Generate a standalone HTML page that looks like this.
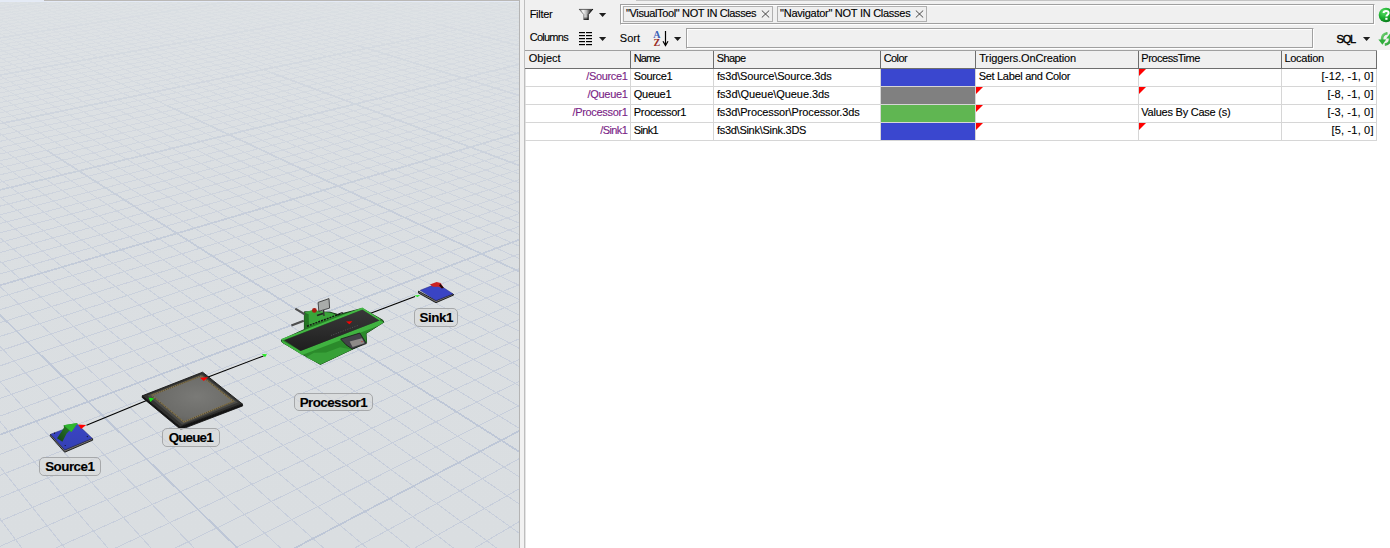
<!DOCTYPE html>
<html><head><meta charset="utf-8">
<style>
*{margin:0;padding:0;box-sizing:border-box}
html,body{width:1390px;height:548px;overflow:hidden;background:#f0f0f0;font-family:"Liberation Sans",sans-serif;font-size:11px;color:#000}
.a{position:absolute}
#view{position:absolute;left:0;top:0;width:519px;height:548px;background:linear-gradient(#dee2e5 0px,#dbdfe2 180px,#dadee1 548px);overflow:hidden}
.lbl{position:absolute;height:19px;border:1px solid #a9abad;border-radius:5px;background:rgba(214,216,218,0.55);font-weight:bold;font-size:13px;line-height:17px;text-align:center;color:#0a0a0a;white-space:nowrap}
.t{position:absolute;white-space:nowrap;line-height:13px;color:#000;-webkit-text-stroke:0.12px #000}
.c{position:absolute;white-space:nowrap;line-height:13px;color:#000;-webkit-text-stroke:0.12px #000}
.r{text-align:right}
.p{color:#7a1e86;-webkit-text-stroke:0.12px #7a1e86}
.tri{position:absolute;width:0;height:0;border-top:7px solid #f00;border-right:7px solid transparent}
.arr{position:absolute;width:0;height:0;border-top:4px solid #222;border-left:4px solid transparent;border-right:4px solid transparent}
</style></head><body>
<div id="view">
<svg width="519" height="548" viewBox="0 0 519 548" style="position:absolute;left:0;top:0">
<defs><linearGradient id="fg" x1="0" y1="0" x2="0" y2="548" gradientUnits="userSpaceOnUse">
<stop offset="0" stop-color="#fff" stop-opacity="0.10"/>
<stop offset="0.1" stop-color="#fff" stop-opacity="0.28"/>
<stop offset="0.25" stop-color="#fff" stop-opacity="0.5"/>
<stop offset="0.45" stop-color="#fff" stop-opacity="0.8"/>
<stop offset="0.72" stop-color="#fff" stop-opacity="1"/>
<stop offset="1" stop-color="#fff" stop-opacity="1"/></linearGradient>
<mask id="gm"><rect width="519" height="548" fill="url(#fg)"/></mask></defs>
<g mask="url(#gm)" fill="none" shape-rendering="crispEdges">
<path d="M8330.46 -16195.53L-692.46 -12.30 M12000.26 -25192.07L-679.54 -13.52 M25174.46 -57488.75L-666.76 -14.74 M-77331.91 193806.65L-654.11 -15.94 M-12858.32 35749.00L-641.58 -17.13 M-6266.50 19589.08L-629.18 -18.31 M-3759.12 13442.22L-616.90 -19.47 M-2437.89 10203.21L-604.75 -20.63 M-1622.13 8203.36L-592.72 -21.77 M-667.79 5863.79L-569.00 -24.02 M-364.61 5120.53L-557.32 -25.13 M-127.14 4538.37L-545.75 -26.23 M63.90 4070.04L-534.29 -27.32 M220.91 3685.14L-522.94 -28.40 M352.23 3363.19L-511.70 -29.46 M463.70 3089.92L-500.57 -30.52 M559.50 2855.06L-489.54 -31.57 M642.72 2651.05L-478.62 -32.61 M780.17 2314.08L-457.08 -34.65 M837.59 2173.33L-446.46 -35.66 M889.03 2047.21L-435.94 -36.66 M935.39 1933.57L-425.51 -37.65 M977.38 1830.63L-415.18 -38.63 M1015.59 1736.96L-404.95 -39.60 M1050.51 1651.35L-394.81 -40.57 M1082.55 1572.80L-384.76 -41.52 M1112.05 1500.49L-374.80 -42.47 M1164.55 1371.79L-355.14 -44.33 M1188.00 1314.28L-345.45 -45.25 M1209.86 1260.71L-335.84 -46.17 M1230.27 1210.68L-326.32 -47.07 M1249.37 1163.86L-316.88 -47.97 M1267.28 1119.94L-307.52 -48.86 M1284.12 1078.66L-298.24 -49.74 M1299.97 1039.80L-289.04 -50.61 M1314.92 1003.14L-279.92 -51.48 M1342.42 935.73L-261.92 -53.19 M1355.09 904.67L-253.04 -54.03 M1367.11 875.20L-244.23 -54.87 M1378.54 847.19L-235.49 -55.70 M1389.41 820.54L-226.83 -56.52 M1399.77 795.15L-218.24 -57.34 M1409.64 770.94L-209.72 -58.15 M1419.07 747.82L-201.27 -58.95 M1428.09 725.72L-192.89 -59.74 M1444.97 684.33L-176.34 -61.32 M1452.88 664.93L-168.17 -62.09 M1460.48 646.31L-160.06 -62.86 M1467.77 628.44L-152.02 -63.63 M1474.78 611.26L-144.04 -64.38 M1481.52 594.74L-136.13 -65.14 M1488.00 578.84L-128.28 -65.88 M1494.25 563.52L-120.49 -66.62 M1500.27 548.77L-112.76 -67.35 M1511.68 520.80L-97.49 -68.80 M1517.09 507.53L-89.95 -69.52 M1522.32 494.71L-82.46 -70.23 M1527.37 482.32L-75.04 -70.94 M1532.26 470.34L-67.67 -71.64 M1536.99 458.74L-60.35 -72.33 M1541.57 447.50L-53.10 -73.02 M1546.01 436.62L-45.90 -73.71 M1550.32 426.07L-38.75 -74.38 M1558.54 405.91L-24.62 -75.73 M1562.47 396.27L-17.64 -76.39 M1566.29 386.91L-10.70 -77.05 M1570.00 377.82L-3.82 -77.70 M1573.60 368.99L3.01 -78.35 M1577.11 360.39L9.78 -78.99 M1580.52 352.04L16.51 -79.63 M1583.83 343.91L23.19 -80.27 M1587.06 335.99L29.82 -80.90 M1593.27 320.77L42.93 -82.14 M1596.25 313.46L49.42 -82.76 M1599.16 306.33L55.86 -83.37 M1602.00 299.37L62.25 -83.98 M1604.77 292.59L68.59 -84.58 M1607.46 285.97L74.90 -85.18 M1610.10 279.51L81.15 -85.77 M1612.67 273.21L87.36 -86.36 M1615.18 267.05L93.53 -86.95 M1620.03 255.16L105.73 -88.11 M1622.38 249.42L111.77 -88.68 M1624.67 243.80L117.76 -89.25 M1626.91 238.31L123.72 -89.82 M1629.10 232.94L129.63 -90.38 M1631.24 227.69L135.50 -90.93 M1633.34 222.55L141.33 -91.49 M1635.39 217.52L147.12 -92.04 M1637.40 212.59L152.87 -92.58 M1641.29 203.04L164.26 -93.67 M1643.18 198.42L169.89 -94.20 M1645.03 193.88L175.49 -94.73 M1646.84 189.44L181.05 -95.26 M1648.62 185.08L186.57 -95.78 M1650.36 180.81L192.06 -96.31 M1652.07 176.62L197.50 -96.82 M1653.75 172.51L202.91 -97.34 M1655.39 168.48L208.29 -97.85 M1658.59 160.65L218.94 -98.86 M1660.14 156.84L224.21 -99.36 M1661.67 153.10L229.44 -99.86 M1663.16 149.43L234.65 -100.35 M1664.63 145.82L239.81 -100.84 M1666.08 142.28L244.95 -101.33 M1667.50 138.80L250.05 -101.81 M1668.89 135.39L255.12 -102.30 M1670.26 132.03L260.16 -102.77 M1672.93 125.48L270.13 -103.72 M1674.23 122.29L275.07 -104.19 M1675.51 119.16L279.98 -104.66 M1676.77 116.08L284.86 -105.12 M1678.00 113.04L289.71 -105.58 M1679.22 110.06L294.53 -106.04 M1680.42 107.13L299.31 -106.49 M1681.60 104.24L304.07 -106.94 M1682.76 101.40L308.80 -107.39 M1685.02 95.85L318.17 -108.28 M1686.12 93.14L322.81 -108.72 M1687.21 90.47L327.42 -109.16 M1688.28 87.85L332.01 -109.60 M1689.34 85.26L336.56 -110.03 M1690.38 82.71L341.09 -110.46 M1691.40 80.20L345.59 -110.89 M1692.41 77.73L350.07 -111.31 M1693.40 75.30L354.51 -111.74 M10867.18 -18936.99L1671.30 69.70 M27601.50 -46304.26L1648.68 66.56 M-61303.40 99090.56L1626.52 63.49 M-15178.63 23658.25L1604.80 60.48 M-8871.17 13343.04L1583.50 57.53 M-6367.03 9247.77L1562.62 54.64 M-5023.06 7049.85L1542.13 51.80 M-4184.65 5678.72L1522.04 49.02 M-3611.69 4741.70L1502.33 46.28 M-2879.12 3543.66L1464.00 40.97 M-2630.78 3137.53L1445.37 38.39 M-2430.58 2810.12L1427.07 35.86 M-2265.77 2540.58L1409.11 33.37 M-2127.71 2314.81L1391.46 30.92 M-2010.39 2122.94L1374.13 28.52 M-1909.46 1957.88L1357.10 26.16 M-1821.71 1814.37L1340.37 23.84 M-1744.71 1688.45L1323.92 21.56 M-1615.94 1477.86L1291.88 17.12 M-1561.55 1388.92L1276.25 14.96 M-1512.52 1308.73L1260.89 12.83 M-1468.09 1236.06L1245.79 10.74 M-1427.64 1169.91L1230.93 8.68 M-1390.66 1109.43L1216.32 6.65 M-1356.72 1053.93L1201.93 4.66 M-1325.46 1002.81L1187.78 2.70 M-1296.58 955.58L1173.86 0.77 M-1244.94 871.12L1146.66 -3.00 M-1221.76 833.21L1133.38 -4.84 M-1200.10 797.80L1120.30 -6.65 M-1179.84 764.66L1107.43 -8.44 M-1160.82 733.56L1094.74 -10.19 M-1142.95 704.33L1082.25 -11.93 M-1126.12 676.81L1069.95 -13.63 M-1110.24 650.84L1057.82 -15.31 M-1095.24 626.31L1045.88 -16.97 M-1067.58 581.08L1022.51 -20.20 M-1054.81 560.19L1011.08 -21.79 M-1042.67 540.33L999.81 -23.35 M-1031.12 521.44L988.70 -24.89 M-1020.11 503.44L977.75 -26.41 M-1009.61 486.27L966.95 -27.90 M-999.59 469.88L956.30 -29.38 M-990.01 454.21L945.80 -30.83 M-980.84 439.22L935.44 -32.27 M-963.64 411.09L915.15 -35.08 M-955.57 397.88L905.20 -36.46 M-947.81 385.20L895.39 -37.82 M-940.36 373.01L885.71 -39.16 M-933.19 361.29L876.16 -40.48 M-926.29 350.01L866.73 -41.79 M-919.65 339.14L857.43 -43.08 M-913.24 328.67L848.24 -44.35 M-907.07 318.57L839.17 -45.61 M-895.35 299.40L821.38 -48.07 M-889.78 290.31L812.66 -49.28 M-884.41 281.51L804.04 -50.48 M-879.20 273.00L795.53 -51.66 M-874.17 264.76L787.12 -52.82 M-869.29 256.79L778.82 -53.97 M-864.56 249.06L770.62 -55.11 M-859.98 241.57L762.52 -56.23 M-855.54 234.30L754.51 -57.34 M-847.05 220.41L738.79 -59.52 M-842.98 213.77L731.07 -60.59 M-839.03 207.31L723.44 -61.65 M-835.20 201.04L715.90 -62.69 M-831.47 194.93L708.44 -63.72 M-827.84 189.00L701.07 -64.75 M-824.31 183.22L693.79 -65.75 M-820.87 177.60L686.59 -66.75 M-817.52 172.12L679.47 -67.74 M-811.08 161.59L665.48 -69.68 M-807.98 156.53L658.60 -70.63 M-804.96 151.59L651.80 -71.57 M-802.02 146.77L645.07 -72.51 M-799.14 142.07L638.41 -73.43 M-796.34 137.48L631.83 -74.34 M-793.60 133.00L625.32 -75.24 M-790.92 128.63L618.88 -76.13 M-788.31 124.35L612.51 -77.02 M-783.26 116.10L599.97 -78.75 M-780.82 112.11L593.80 -79.61 M-778.43 108.20L587.70 -80.46 M-776.10 104.39L581.66 -81.29 M-773.82 100.66L575.68 -82.12 M-771.58 97.00L569.77 -82.94 M-769.40 93.43L563.91 -83.75 M-767.26 89.93L558.12 -84.55 M-765.16 86.50L552.38 -85.35 M-761.10 79.85L541.09 -86.91 M-759.13 76.63L535.52 -87.69 M-757.20 73.47L530.02 -88.45 M-755.30 70.37L524.56 -89.20 M-753.45 67.34L519.17 -89.95 M-751.63 64.36L513.82 -90.69 M-749.84 61.44L508.53 -91.43 M-748.09 58.58L503.29 -92.15 M-746.37 55.77L498.10 -92.87 M-743.03 50.30L487.87 -94.29 M-741.40 47.64L482.82 -94.99 M-739.81 45.03L477.83 -95.68 M-738.24 42.47L472.88 -96.37 M-736.70 39.95L467.98 -97.04 M-735.19 37.48L463.13 -97.72 M-733.70 35.05L458.32 -98.38 M-732.24 32.67L453.56 -99.04 M-730.81 30.32L448.84 -99.70 M-728.01 25.75L439.53 -100.99 M-726.65 23.52L434.94 -101.62 M-725.31 21.32L430.39 -102.25 M-723.99 19.17L425.88 -102.88 M-722.69 17.05L421.42 -103.50 M-721.42 14.96L416.99 -104.11 M-720.16 12.91L412.60 -104.72 M-718.93 10.89L408.25 -105.32 M-717.71 8.90L403.94 -105.92 M-715.34 5.02L395.44 -107.10 M-714.18 3.12L391.24 -107.68 M-713.04 1.25L387.08 -108.26 M-711.91 -0.59L382.95 -108.83 M-710.80 -2.40L378.86 -109.39 M-709.71 -4.18L374.81 -109.96 M-708.64 -5.94L370.79 -110.51 M-707.58 -7.67L366.80 -111.06 M-706.54 -9.38L362.85 -111.61" stroke="#c7cedb" stroke-width="1"/>
<path d="M46.61 150.24L39.03 145.41 M39.03 145.41L31.64 140.69 M31.64 140.69L24.43 136.09 M24.43 136.09L17.39 131.59 M17.39 131.59L10.51 127.21 M10.51 127.21L3.80 122.92 M3.80 122.92L-2.76 118.74 M-2.76 118.74L-9.17 114.65 M-9.17 114.65L-15.44 110.65 M-15.44 110.65L-21.57 106.74 M-21.57 106.74L-27.56 102.92 M-27.56 102.92L-33.42 99.18 M-33.42 99.18L-39.15 95.52 M-39.15 95.52L-44.76 91.94 M-44.76 91.94L-50.26 88.44 M167.06 105.41L159.00 101.61 M159.00 101.61L151.11 97.89 M151.11 97.89L143.40 94.25 M143.40 94.25L135.85 90.68 M135.85 90.68L128.46 87.19 M128.46 87.19L121.22 83.78 M121.22 83.78L114.14 80.44 M114.14 80.44L107.19 77.16 M107.19 77.16L100.39 73.95 M100.39 73.95L93.73 70.80 M93.73 70.80L87.19 67.72 M87.19 67.72L80.79 64.70 M80.79 64.70L74.51 61.73 M74.51 61.73L68.35 58.83 M68.35 58.83L62.30 55.98 M62.30 55.98L56.38 53.18 M56.38 53.18L50.56 50.43 M50.56 50.43L44.85 47.74 M44.85 47.74L39.25 45.09 M39.25 45.09L33.74 42.50 M33.74 42.50L28.34 39.95 M28.34 39.95L23.03 37.44 M23.03 37.44L17.82 34.98 M17.82 34.98L12.70 32.57 M12.70 32.57L7.67 30.19 M7.67 30.19L2.72 27.86 M2.72 27.86L-2.14 25.56 M-2.14 25.56L-6.92 23.31 M-6.92 23.31L-11.61 21.09 M-11.61 21.09L-16.23 18.91 M-16.23 18.91L-20.78 16.77 M-20.78 16.77L-25.24 14.66 M-25.24 14.66L-29.64 12.59 M-29.64 12.59L-33.96 10.55 M-33.96 10.55L-38.22 8.54 M-38.22 8.54L-42.41 6.56 M-42.41 6.56L-46.53 4.62 M-46.53 4.62L-50.59 2.70 M271.51 72.78L263.14 69.65 M263.14 69.65L254.94 66.58 M254.94 66.58L246.89 63.57 M246.89 63.57L239.01 60.62 M239.01 60.62L231.27 57.73 M231.27 57.73L223.68 54.89 M223.68 54.89L216.24 52.11 M216.24 52.11L208.94 49.37 M208.94 49.37L201.77 46.69 M201.77 46.69L194.73 44.06 M194.73 44.06L187.82 41.47 M187.82 41.47L181.03 38.94 M181.03 38.94L174.37 36.44 M174.37 36.44L167.82 33.99 M167.82 33.99L161.39 31.59 M161.39 31.59L155.07 29.23 M155.07 29.23L148.86 26.90 M148.86 26.90L142.75 24.62 M142.75 24.62L136.75 22.37 M136.75 22.37L130.85 20.17 M130.85 20.17L125.05 18.00 M125.05 18.00L119.34 15.86 M119.34 15.86L113.73 13.76 M113.73 13.76L108.21 11.70 M108.21 11.70L102.78 9.67 M102.78 9.67L97.43 7.67 M97.43 7.67L92.17 5.70 M92.17 5.70L86.99 3.76 M86.99 3.76L81.90 1.86 M81.90 1.86L76.88 -0.02 M76.88 -0.02L71.94 -1.87 M71.94 -1.87L67.07 -3.69 M67.07 -3.69L62.28 -5.48 M358.35 45.65L349.89 43.03 M349.89 43.03L341.57 40.45 M341.57 40.45L333.41 37.93 M333.41 37.93L325.39 35.45 M325.39 35.45L317.52 33.01 M317.52 33.01L309.78 30.61 M309.78 30.61L302.18 28.26 M302.18 28.26L294.71 25.95 M294.71 25.95L287.36 23.68 M287.36 23.68L280.14 21.44 M280.14 21.44L273.04 19.24 M273.04 19.24L266.06 17.08 M266.06 17.08L259.20 14.96 M259.20 14.96L252.45 12.87 M252.45 12.87L245.80 10.81 M245.80 10.81L239.27 8.79 M239.27 8.79L232.83 6.80 M232.83 6.80L226.50 4.84 M226.50 4.84L220.27 2.91 M220.27 2.91L214.14 1.01 M214.14 1.01L208.10 -0.85 M208.10 -0.85L202.16 -2.69 M202.16 -2.69L196.31 -4.51 M196.31 -4.51L190.54 -6.29 M440.27 25.00L431.69 22.73 M431.69 22.73L423.26 20.51 M423.26 20.51L414.97 18.32 M414.97 18.32L406.81 16.17 M406.81 16.17L398.79 14.06 M398.79 14.06L390.90 11.98 M390.90 11.98L383.14 9.93 M383.14 9.93L375.51 7.92 M375.51 7.92L367.99 5.93 M367.99 5.93L360.60 3.98 M360.60 3.98L353.32 2.06 M353.32 2.06L346.16 0.17 M346.16 0.17L339.10 -1.69 M339.10 -1.69L332.16 -3.52 M332.16 -3.52L325.32 -5.32 M520.23 9.05L511.50 7.04 M511.50 7.04L502.91 5.07 M502.91 5.07L494.45 3.13 M494.45 3.13L486.13 1.22 M486.13 1.22L477.94 -0.67 M477.94 -0.67L469.87 -2.52 M469.87 -2.52L461.93 -4.34 M461.93 -4.34L454.11 -6.14 M547.33 57.65L556.06 55.54 M556.06 55.54L564.68 53.45 M564.68 53.45L573.17 51.40 M431.82 34.99L440.62 33.19 M440.62 33.19L449.30 31.40 M449.30 31.40L457.88 29.64 M457.88 29.64L466.35 27.90 M466.35 27.90L474.72 26.18 M474.72 26.18L482.99 24.48 M482.99 24.48L491.15 22.81 M491.15 22.81L499.22 21.15 M499.22 21.15L507.19 19.51 M507.19 19.51L515.06 17.89 M515.06 17.89L522.84 16.30 M522.84 16.30L530.53 14.72 M530.53 14.72L538.13 13.16 M538.13 13.16L545.64 11.61 M545.64 11.61L553.06 10.09 M553.06 10.09L560.40 8.58 M560.40 8.58L567.65 7.09 M567.65 7.09L574.82 5.62 M323.88 17.15L332.73 15.56 M332.73 15.56L341.49 14.00 M341.49 14.00L350.14 12.45 M350.14 12.45L358.70 10.92 M358.70 10.92L367.15 9.41 M367.15 9.41L375.51 7.92 M375.51 7.92L383.77 6.44 M383.77 6.44L391.94 4.98 M391.94 4.98L400.02 3.53 M400.02 3.53L408.00 2.11 M408.00 2.11L415.90 0.69 M415.90 0.69L423.71 -0.70 M423.71 -0.70L431.44 -2.08 M431.44 -2.08L439.07 -3.45 M439.07 -3.45L446.63 -4.80 M446.63 -4.80L454.11 -6.14 M229.21 1.50L238.06 0.10 M238.06 0.10L246.80 -1.29 M246.80 -1.29L255.45 -2.66 M255.45 -2.66L264.00 -4.01 M264.00 -4.01L272.46 -5.35" stroke="#c2cad8" stroke-width="1"/>
<path d="M27601.50 -46304.26L-61303.40 99090.56 M257.32 567.62L236.58 547.25 M236.58 547.25L216.85 527.88 M216.85 527.88L198.07 509.44 M198.07 509.44L180.18 491.86 M180.18 491.86L163.10 475.10 M163.10 475.10L146.78 459.08 M146.78 459.08L131.19 443.76 M131.19 443.76L116.26 429.10 M116.26 429.10L101.95 415.05 M101.95 415.05L88.24 401.59 M88.24 401.59L75.07 388.66 M75.07 388.66L62.43 376.25 M62.43 376.25L50.28 364.31 M50.28 364.31L38.59 352.83 M38.59 352.83L27.33 341.78 M27.33 341.78L16.49 331.13 M16.49 331.13L6.03 320.86 M6.03 320.86L-4.05 310.96 M-4.05 310.96L-13.79 301.40 M-13.79 301.40L-23.19 292.16 M-23.19 292.16L-32.28 283.24 M-32.28 283.24L-41.07 274.61 M-41.07 274.61L-49.57 266.26 M-49.57 266.26L-57.81 258.18 M576.04 488.05L549.96 471.41 M549.96 471.41L525.05 455.51 M525.05 455.51L501.23 440.31 M501.23 440.31L478.42 425.76 M478.42 425.76L456.57 411.82 M456.57 411.82L435.62 398.45 M435.62 398.45L415.50 385.61 M415.50 385.61L396.18 373.29 M396.18 373.29L377.61 361.44 M377.61 361.44L359.74 350.03 M359.74 350.03L342.53 339.06 M342.53 339.06L325.96 328.48 M325.96 328.48L309.97 318.28 M309.97 318.28L294.55 308.44 M294.55 308.44L279.67 298.94 M279.67 298.94L265.29 289.77 M265.29 289.77L251.39 280.90 M251.39 280.90L237.95 272.33 M237.95 272.33L224.94 264.03 M224.94 264.03L212.35 255.99 M212.35 255.99L200.16 248.21 M200.16 248.21L188.34 240.67 M188.34 240.67L176.88 233.36 M176.88 233.36L165.76 226.27 M165.76 226.27L154.97 219.38 M154.97 219.38L144.50 212.70 M144.50 212.70L134.32 206.21 M134.32 206.21L124.44 199.90 M124.44 199.90L114.82 193.77 M114.82 193.77L105.48 187.80 M105.48 187.80L96.38 182.00 M96.38 182.00L87.53 176.35 M87.53 176.35L78.92 170.85 M78.92 170.85L70.52 165.50 M70.52 165.50L62.35 160.28 M62.35 160.28L54.38 155.20 M54.38 155.20L46.61 150.24 M571.98 296.50L552.66 287.38 M552.66 287.38L533.99 278.57 M533.99 278.57L515.94 270.05 M515.94 270.05L498.46 261.81 M498.46 261.81L481.54 253.82 M481.54 253.82L465.16 246.09 M465.16 246.09L449.27 238.59 M449.27 238.59L433.87 231.32 M433.87 231.32L418.93 224.27 M418.93 224.27L404.43 217.43 M404.43 217.43L390.35 210.79 M390.35 210.79L376.67 204.33 M376.67 204.33L363.38 198.06 M363.38 198.06L350.46 191.96 M350.46 191.96L337.90 186.03 M337.90 186.03L325.67 180.26 M325.67 180.26L313.77 174.65 M313.77 174.65L302.19 169.18 M302.19 169.18L290.90 163.85 M290.90 163.85L279.91 158.67 M279.91 158.67L269.19 153.61 M269.19 153.61L258.74 148.68 M258.74 148.68L248.56 143.87 M248.56 143.87L238.61 139.18 M238.61 139.18L228.91 134.60 M228.91 134.60L219.45 130.13 M219.45 130.13L210.20 125.77 M210.20 125.77L201.17 121.51 M201.17 121.51L192.35 117.34 M192.35 117.34L183.72 113.28 M183.72 113.28L175.30 109.30 M175.30 109.30L167.06 105.41 M585.36 190.17L569.60 184.27 M569.60 184.27L554.26 178.53 M554.26 178.53L539.33 172.95 M539.33 172.95L524.79 167.51 M524.79 167.51L510.63 162.22 M510.63 162.22L496.84 157.06 M496.84 157.06L483.39 152.03 M483.39 152.03L470.28 147.12 M470.28 147.12L457.50 142.34 M457.50 142.34L445.02 137.67 M445.02 137.67L432.85 133.12 M432.85 133.12L420.96 128.68 M420.96 128.68L409.36 124.34 M409.36 124.34L398.02 120.10 M398.02 120.10L386.95 115.95 M386.95 115.95L376.13 111.91 M376.13 111.91L365.55 107.95 M365.55 107.95L355.20 104.08 M355.20 104.08L345.09 100.30 M345.09 100.30L335.19 96.59 M335.19 96.59L325.50 92.97 M325.50 92.97L316.03 89.43 M316.03 89.43L306.75 85.96 M306.75 85.96L297.66 82.56 M297.66 82.56L288.77 79.23 M288.77 79.23L280.05 75.97 M280.05 75.97L271.51 72.78 M581.05 114.57L568.03 110.54 M568.03 110.54L555.31 106.60 M555.31 106.60L542.88 102.75 M542.88 102.75L530.71 98.99 M530.71 98.99L518.81 95.31 M518.81 95.31L507.17 91.70 M507.17 91.70L495.77 88.18 M495.77 88.18L484.61 84.72 M484.61 84.72L473.69 81.34 M473.69 81.34L462.99 78.03 M462.99 78.03L452.51 74.79 M452.51 74.79L442.24 71.61 M442.24 71.61L432.17 68.49 M432.17 68.49L422.31 65.44 M422.31 65.44L412.63 62.45 M412.63 62.45L403.15 59.51 M403.15 59.51L393.84 56.63 M393.84 56.63L384.72 53.81 M384.72 53.81L375.76 51.03 M375.76 51.03L366.98 48.32 M366.98 48.32L358.35 45.65 M578.01 61.32L566.93 58.40 M566.93 58.40L556.06 55.54 M556.06 55.54L545.41 52.72 M545.41 52.72L534.95 49.97 M534.95 49.97L524.69 47.26 M524.69 47.26L514.61 44.60 M514.61 44.60L504.73 42.00 M504.73 42.00L495.02 39.43 M495.02 39.43L485.48 36.92 M485.48 36.92L476.12 34.45 M476.12 34.45L466.92 32.02 M466.92 32.02L457.88 29.64 M457.88 29.64L449.00 27.30 M449.00 27.30L440.27 25.00 M575.75 21.79L566.10 19.58 M566.10 19.58L556.62 17.40 M556.62 17.40L547.30 15.26 M547.30 15.26L538.13 13.16 M538.13 13.16L529.11 11.08 M529.11 11.08L520.23 9.05 M25174.46 -57488.75L-77331.91 193806.65 M257.32 567.62L285.68 552.82 M285.68 552.82L313.03 538.54 M313.03 538.54L339.43 524.77 M339.43 524.77L364.92 511.46 M364.92 511.46L389.55 498.60 M389.55 498.60L413.37 486.17 M413.37 486.17L436.40 474.15 M436.40 474.15L458.71 462.51 M458.71 462.51L480.30 451.23 M480.30 451.23L501.23 440.31 M501.23 440.31L521.51 429.72 M521.51 429.72L541.18 419.45 M541.18 419.45L560.27 409.49 M560.27 409.49L578.80 399.82 M-78.91 464.38L-48.86 453.09 M-48.86 453.09L-19.74 442.15 M-19.74 442.15L8.50 431.54 M8.50 431.54L35.88 421.26 M35.88 421.26L62.45 411.28 M62.45 411.28L88.24 401.59 M88.24 401.59L113.29 392.17 M113.29 392.17L137.62 383.03 M137.62 383.03L161.28 374.14 M161.28 374.14L184.28 365.50 M184.28 365.50L206.66 357.10 M206.66 357.10L228.43 348.92 M228.43 348.92L249.63 340.95 M249.63 340.95L270.27 333.20 M270.27 333.20L290.38 325.64 M290.38 325.64L309.97 318.28 M309.97 318.28L329.07 311.10 M329.07 311.10L347.70 304.11 M347.70 304.11L365.87 297.28 M365.87 297.28L383.60 290.62 M383.60 290.62L400.90 284.12 M400.90 284.12L417.79 277.77 M417.79 277.77L434.29 271.57 M434.29 271.57L450.41 265.52 M450.41 265.52L466.15 259.60 M466.15 259.60L481.54 253.82 M481.54 253.82L496.59 248.17 M496.59 248.17L511.30 242.64 M511.30 242.64L525.69 237.23 M525.69 237.23L539.77 231.94 M539.77 231.94L553.55 226.77 M553.55 226.77L567.04 221.70 M567.04 221.70L580.24 216.74 M-69.18 305.68L-45.90 298.84 M-45.90 298.84L-23.19 292.16 M-23.19 292.16L-1.03 285.65 M-1.03 285.65L20.61 279.29 M20.61 279.29L41.74 273.08 M41.74 273.08L62.39 267.01 M62.39 267.01L82.56 261.08 M82.56 261.08L102.28 255.29 M102.28 255.29L121.55 249.62 M121.55 249.62L140.40 244.08 M140.40 244.08L158.84 238.66 M158.84 238.66L176.88 233.36 M176.88 233.36L194.53 228.17 M194.53 228.17L211.81 223.09 M211.81 223.09L228.73 218.12 M228.73 218.12L245.29 213.25 M245.29 213.25L261.52 208.48 M261.52 208.48L277.41 203.81 M277.41 203.81L292.99 199.23 M292.99 199.23L308.26 194.74 M308.26 194.74L323.22 190.35 M323.22 190.35L337.90 186.03 M337.90 186.03L352.29 181.80 M352.29 181.80L366.40 177.65 M366.40 177.65L380.25 173.58 M380.25 173.58L393.84 169.59 M393.84 169.59L407.17 165.67 M407.17 165.67L420.26 161.83 M420.26 161.83L433.11 158.05 M433.11 158.05L445.72 154.34 M445.72 154.34L458.11 150.70 M458.11 150.70L470.28 147.12 M470.28 147.12L482.24 143.61 M482.24 143.61L493.98 140.16 M493.98 140.16L505.53 136.76 M505.53 136.76L516.87 133.43 M516.87 133.43L528.02 130.15 M528.02 130.15L538.98 126.93 M538.98 126.93L549.76 123.76 M549.76 123.76L560.36 120.65 M560.36 120.65L570.79 117.58 M-63.01 205.15L-44.02 200.57 M-44.02 200.57L-25.41 196.07 M-25.41 196.07L-7.17 191.66 M-7.17 191.66L10.72 187.33 M10.72 187.33L28.26 183.10 M28.26 183.10L45.47 178.94 M45.47 178.94L62.35 174.86 M62.35 174.86L78.92 170.85 M78.92 170.85L95.17 166.93 M95.17 166.93L111.13 163.07 M111.13 163.07L126.79 159.28 M126.79 159.28L142.17 155.57 M142.17 155.57L157.28 151.92 M157.28 151.92L172.11 148.33 M172.11 148.33L186.69 144.81 M186.69 144.81L201.01 141.35 M201.01 141.35L215.08 137.94 M215.08 137.94L228.91 134.60 M228.91 134.60L242.51 131.32 M242.51 131.32L255.88 128.09 M255.88 128.09L269.02 124.91 M269.02 124.91L281.94 121.79 M281.94 121.79L294.66 118.71 M294.66 118.71L307.16 115.69 M307.16 115.69L319.46 112.72 M319.46 112.72L331.57 109.79 M331.57 109.79L343.48 106.91 M343.48 106.91L355.20 104.08 M355.20 104.08L366.74 101.29 M366.74 101.29L378.10 98.55 M378.10 98.55L389.29 95.84 M389.29 95.84L400.30 93.18 M400.30 93.18L411.14 90.56 M411.14 90.56L421.83 87.98 M421.83 87.98L432.35 85.44 M432.35 85.44L442.71 82.93 M442.71 82.93L452.93 80.46 M452.93 80.46L462.99 78.03 M462.99 78.03L472.91 75.63 M472.91 75.63L482.68 73.27 M482.68 73.27L492.31 70.94 M492.31 70.94L501.81 68.65 M501.81 68.65L511.17 66.39 M511.17 66.39L520.40 64.15 M520.40 64.15L529.50 61.95 M529.50 61.95L538.48 59.79 M538.48 59.79L547.33 57.65 M-58.75 135.77L-42.72 132.48 M-42.72 132.48L-26.95 129.24 M-26.95 129.24L-11.45 126.06 M-11.45 126.06L3.80 122.92 M3.80 122.92L18.79 119.84 M18.79 119.84L33.54 116.81 M33.54 116.81L48.05 113.83 M48.05 113.83L62.33 110.90 M62.33 110.90L76.38 108.01 M76.38 108.01L90.20 105.17 M90.20 105.17L103.82 102.38 M103.82 102.38L117.22 99.62 M117.22 99.62L130.41 96.91 M130.41 96.91L143.40 94.25 M143.40 94.25L156.19 91.62 M156.19 91.62L168.79 89.03 M168.79 89.03L181.20 86.48 M181.20 86.48L193.43 83.97 M193.43 83.97L205.48 81.49 M205.48 81.49L217.35 79.05 M217.35 79.05L229.05 76.65 M229.05 76.65L240.57 74.28 M240.57 74.28L251.94 71.95 M251.94 71.95L263.14 69.65 M263.14 69.65L274.18 67.38 M274.18 67.38L285.07 65.14 M285.07 65.14L295.81 62.94 M295.81 62.94L306.40 60.76 M306.40 60.76L316.84 58.61 M316.84 58.61L327.14 56.50 M327.14 56.50L337.30 54.41 M337.30 54.41L347.33 52.35 M347.33 52.35L357.22 50.32 M357.22 50.32L366.98 48.32 M366.98 48.32L376.61 46.34 M376.61 46.34L386.11 44.38 M386.11 44.38L395.49 42.46 M395.49 42.46L404.75 40.56 M404.75 40.56L413.89 38.68 M413.89 38.68L422.91 36.82 M422.91 36.82L431.82 34.99 M-55.64 85.00L-41.76 82.52 M-41.76 82.52L-28.08 80.08 M-28.08 80.08L-14.61 77.67 M-14.61 77.67L-1.33 75.29 M-1.33 75.29L11.77 72.95 M11.77 72.95L24.67 70.64 M24.67 70.64L37.39 68.37 M37.39 68.37L49.94 66.13 M49.94 66.13L62.31 63.92 M62.31 63.92L74.51 61.73 M74.51 61.73L86.54 59.58 M86.54 59.58L98.40 57.46 M98.40 57.46L110.11 55.37 M110.11 55.37L121.66 53.30 M121.66 53.30L133.05 51.27 M133.05 51.27L144.30 49.26 M144.30 49.26L155.39 47.27 M155.39 47.27L166.34 45.31 M166.34 45.31L177.15 43.38 M177.15 43.38L187.82 41.47 M187.82 41.47L198.35 39.59 M198.35 39.59L208.74 37.73 M208.74 37.73L219.01 35.90 M219.01 35.90L229.14 34.09 M229.14 34.09L239.15 32.30 M239.15 32.30L249.03 30.53 M249.03 30.53L258.79 28.78 M258.79 28.78L268.43 27.06 M268.43 27.06L277.96 25.36 M277.96 25.36L287.36 23.68 M287.36 23.68L296.66 22.01 M296.66 22.01L305.84 20.37 M305.84 20.37L314.91 18.75 M314.91 18.75L323.88 17.15 M-53.26 46.24L-41.03 44.30 M-41.03 44.30L-28.95 42.39 M-28.95 42.39L-17.03 40.50 M-17.03 40.50L-5.27 38.64 M-5.27 38.64L6.35 36.80 M6.35 36.80L17.82 34.98 M17.82 34.98L29.15 33.19 M29.15 33.19L40.33 31.42 M40.33 31.42L51.38 29.67 M51.38 29.67L62.29 27.94 M62.29 27.94L73.07 26.23 M73.07 26.23L83.72 24.54 M83.72 24.54L94.24 22.88 M94.24 22.88L104.63 21.23 M104.63 21.23L114.90 19.60 M114.90 19.60L125.05 18.00 M125.05 18.00L135.08 16.41 M135.08 16.41L144.99 14.84 M144.99 14.84L154.78 13.29 M154.78 13.29L164.46 11.75 M164.46 11.75L174.03 10.24 M174.03 10.24L183.49 8.74 M183.49 8.74L192.85 7.26 M192.85 7.26L202.09 5.79 M202.09 5.79L211.23 4.34 M211.23 4.34L220.27 2.91 M220.27 2.91L229.21 1.50 M-51.38 15.68L-40.45 14.12 M-40.45 14.12L-29.64 12.59 M-29.64 12.59L-18.96 11.07 M-18.96 11.07L-8.39 9.56 M-8.39 9.56L2.05 8.08 M2.05 8.08L12.37 6.61 M12.37 6.61L22.58 5.16 M22.58 5.16L32.67 3.72 M32.67 3.72L42.65 2.30 M42.65 2.30L52.52 0.90 M52.52 0.90L62.28 -0.49 M62.28 -0.49L71.94 -1.87 M71.94 -1.87L81.49 -3.23 M81.49 -3.23L90.93 -4.57 M90.93 -4.57L100.28 -5.90" stroke="#bec7d7" stroke-width="1.7"/>
</g></svg>
<svg width="519" height="548" viewBox="0 0 519 548" style="position:absolute;left:0;top:0">
<defs>
<radialGradient id="qg" cx="0.55" cy="0.45" r="0.75"><stop offset="0" stop-color="#7a7a77"/><stop offset="0.6" stop-color="#6c6c69"/><stop offset="1" stop-color="#555552"/></radialGradient>
<linearGradient id="bg" x1="0" y1="0" x2="0" y2="1"><stop offset="0" stop-color="#383838"/><stop offset="0.5" stop-color="#2c2c2c"/><stop offset="1" stop-color="#1e1e1e"/></linearGradient>
<linearGradient id="blu" x1="0" y1="0" x2="0" y2="1"><stop offset="0" stop-color="#3a44c4"/><stop offset="1" stop-color="#3440b4"/></linearGradient>
<linearGradient id="arr" x1="0" y1="1" x2="1" y2="0"><stop offset="0" stop-color="#173f17"/><stop offset="0.55" stop-color="#236d23"/><stop offset="1" stop-color="#2fb52f"/></linearGradient>
</defs>
<g stroke="#000" stroke-width="1.1" fill="none">
<path d="M86.5 425.2 L149 399.4"/><path d="M207.5 377.2 L263.5 355.9"/><path d="M368 314.3 L415 296.4"/>
</g>
<polygon points="50.70,434.20 64.70,449.80 92.20,438.30 92.80,440.10 64.70,452.20 50.20,435.80" fill="#6e6c68" stroke="#111" stroke-width="0.9"/>
<polygon points="50.70,434.20 77.40,424.30 92.20,438.30 64.70,449.80" fill="url(#blu)" stroke="#2a2f80" stroke-width="0.6"/>
<polygon points="57.00,438.20 61.80,431.20 64.00,427.60 63.60,425.20 77.60,422.90 71.40,431.90 69.60,430.60 66.60,433.60 62.40,441.80" fill="url(#arr)"/>
<polygon points="63.60,425.20 77.60,422.90 71.40,431.90 68.00,429.00" fill="#2fb52f"/>
<polygon points="78.20,424.60 86.20,425.00 81.10,428.90" fill="#f00"/>
<circle cx="54.5" cy="433.2" r="0.6" fill="#111"/>
<circle cx="87.3" cy="436.6" r="0.6" fill="#111"/>
<circle cx="65.2" cy="445.5" r="0.6" fill="#111"/>
<polygon points="142.30,395.80 180.20,426.80 242.30,403.90 242.70,405.90 180.80,429.60 142.10,397.40" fill="#141414" stroke="#0c0c0c" stroke-width="0.8"/>
<polygon points="142.30,395.80 202.60,372.20 242.30,403.90 180.20,426.80" fill="#323230" stroke="#161616" stroke-width="0.9"/>
<polygon points="147.50,395.60 202.00,374.20 238.00,402.60 182.00,424.60" fill="#4a4a47"/>
<polygon points="151.70,395.20 201.30,375.90 233.60,401.40 183.90,421.90" fill="url(#qg)" stroke="#857650" stroke-width="1.3"/>
<polygon points="151.70,395.20 201.30,375.90 233.60,401.40 183.90,421.90" fill="none" stroke="#2a2418" stroke-width="0.7" stroke-dasharray="0.8 1.4"/>
<polygon points="148.50,397.60 154.20,398.40 150.40,402.10" fill="#18e018"/>
<polygon points="200.00,377.80 208.20,377.30 203.80,381.10" fill="#f00"/>
<polygon points="261.80,354.00 267.00,354.30 265.00,357.20" fill="#1ee81e"/>
<polygon points="281.40,339.90 304.40,329.50 304.40,311.80 330.00,312.20 338.40,314.60 362.20,308.40 382.80,320.20 383.80,322.20 366.00,333.50 366.60,342.50 320.40,364.40 301.70,353.90 282.00,342.20" fill="#278027" stroke="#0e300e" stroke-width="0.9"/>
<polygon points="304.60,312.40 313.00,309.80 322.00,311.40 332.00,313.20 337.00,316.20 309.00,326.00 305.00,322.00" fill="#3aa53a"/>
<polygon points="304.40,312.40 308.60,314.20 309.20,329.60 304.40,330.20" fill="#247624"/>
<path d="M307 326.2 L340.6 313.7" stroke="#161616" stroke-width="1.5" stroke-dasharray="2 1"/><path d="M337 315.2 L341.5 312.6 L343.2 313" stroke="#161616" stroke-width="1" fill="none"/><path d="M317 315.6 L323 313.6" stroke="#222" stroke-width="1.6"/>
<polygon points="302.50,354.50 378.50,325.60 366.00,333.50 366.60,342.50 320.40,364.40 301.70,353.90" fill="#2b8a2b"/>
<polygon points="306.00,357.20 320.40,364.20 352.00,349.40 340.00,347.20 326.00,352.40 314.00,352.80" fill="#38a038"/>
<polygon points="281.60,340.20 300.80,351.40 301.70,353.90 282.00,342.20" fill="#2a862a"/>
<polygon points="282.20,340.60 300.60,351.00 379.40,320.60 383.80,322.20 379.00,325.40 302.20,355.00 282.00,342.20" fill="#40b240"/>
<path d="M281.6 339.8 L362.2 308.6 L380 320" fill="none" stroke="#45b845" stroke-width="1.8"/>
<polygon points="284.30,340.20 362.40,309.80 379.40,320.60 300.60,351.00" fill="url(#bg)"/>
<path d="M331 335.5 L358 325.4" stroke="#5a5a60" stroke-width="0.8" stroke-dasharray="1 1.5"/>
<polygon points="340.60,339.00 359.80,333.00 366.40,343.60 352.20,349.00 346.00,344.80" fill="#434349" stroke="#121212" stroke-width="0.7"/>
<polygon points="349.60,341.40 362.00,338.20 364.40,343.20 352.60,347.00" fill="#8e8a88"/>
<circle cx="362" cy="341.6" r="0.6" fill="#c02020"/>
<g stroke="#4e4e4e" stroke-width="2.1" stroke-linecap="butt"><path d="M295.3 308.6 L304.9 314.4"/><path d="M291.4 325.6 L303.8 320.8"/></g>
<path d="M323.5 310 L324 316" stroke="#333" stroke-width="1.4"/>
<polygon points="318.10,302.40 329.00,298.60 329.60,308.10 318.80,311.30" fill="#a9aba9" stroke="#2a2a2a" stroke-width="0.8"/>
<circle cx="314.4" cy="310.4" r="2.4" fill="#a81a10"/>
<polygon points="346.00,321.40 352.40,321.30 349.40,324.20" fill="#f00"/>
<polygon points="418.50,291.20 436.00,300.50 452.90,293.80 453.70,295.00 436.00,302.70 418.40,292.90" fill="#77736c" stroke="#111" stroke-width="0.9"/>
<polygon points="420.20,290.30 437.10,283.60 452.90,293.80 436.00,300.50" fill="#3a44c4" stroke="#262c80" stroke-width="0.5"/>
<polygon points="429.90,284.50 436.60,282.00 440.60,283.00 443.70,287.70 441.70,288.30 438.60,286.80 433.00,286.80" fill="#cc2222"/>
<polygon points="440.20,283.80 443.80,287.80 441.80,288.60 439.20,285.60" fill="#1a0808"/>
<polygon points="414.10,295.40 420.20,295.00 417.70,297.10" fill="#1ee81e"/>
</svg>
<div class="a" style="left:39.3px;top:457.1px;width:61.5px;height:18.5px;border:1px solid #a6a8aa;border-radius:5px;background:rgba(216,218,219,0.6)"></div><div class="a" style="left:45.20px;top:458.81px;line-height:16px;font-size:13.4px;font-weight:bold;letter-spacing:-0.533px;color:#000;-webkit-text-stroke:0.1px #000;white-space:nowrap">Source1</div><div class="a" style="left:162.3px;top:428.2px;width:57.5px;height:18.4px;border:1px solid #a6a8aa;border-radius:5px;background:rgba(216,218,219,0.6)"></div><div class="a" style="left:168.70px;top:429.96px;line-height:16px;font-size:13.4px;font-weight:bold;letter-spacing:-0.834px;color:#000;-webkit-text-stroke:0.1px #000;white-space:nowrap">Queue1</div><div class="a" style="left:293.5px;top:393.2px;width:79.1px;height:18.3px;border:1px solid #a6a8aa;border-radius:5px;background:rgba(216,218,219,0.6)"></div><div class="a" style="left:299.70px;top:394.96px;line-height:16px;font-size:13.4px;font-weight:bold;letter-spacing:-0.556px;color:#000;-webkit-text-stroke:0.1px #000;white-space:nowrap">Processor1</div><div class="a" style="left:413.7px;top:308.4px;width:44.7px;height:18.2px;border:1px solid #a6a8aa;border-radius:5px;background:rgba(216,218,219,0.6)"></div><div class="a" style="left:419.50px;top:309.66px;line-height:16px;font-size:13.4px;font-weight:bold;letter-spacing:-0.445px;color:#000;-webkit-text-stroke:0.1px #000;white-space:nowrap">Sink1</div>
</div>
<!-- view edges -->
<div class="a" style="left:0;top:0;width:519px;height:1px;background:#bab8b6"></div>
<div class="a" style="left:0;top:0;width:44px;height:1px;background:#e4eaf4"></div>
<div class="a" style="left:0;top:1px;width:519px;height:1px;background:#e4eaf6"></div>
<div class="a" style="left:519px;top:0;width:1px;height:548px;background:#b4b4b4"></div>
<div class="a" style="left:520px;top:0;width:4px;height:548px;background:#f2f2f2"></div>
<div class="a" style="left:524px;top:0;width:1px;height:548px;background:#bebebe"></div>
<div class="a" style="left:636px;top:0;width:754px;height:1px;background:#c4c4c4"></div>

<!-- toolbar row 1 -->
<svg class="a" style="left:578px;top:8px" width="16" height="13" viewBox="0 0 16 13">
<defs><linearGradient id="fun" x1="0" y1="0" x2="1" y2="0"><stop offset="0" stop-color="#6a6a6a"/><stop offset="0.28" stop-color="#fafafa"/><stop offset="0.55" stop-color="#b4b4b4"/><stop offset="0.8" stop-color="#3a3a3a"/><stop offset="1" stop-color="#080808"/></linearGradient>
<linearGradient id="funs" x1="0" y1="0" x2="0" y2="1"><stop offset="0" stop-color="#fff" stop-opacity="0"/><stop offset="0.7" stop-color="#000" stop-opacity="0"/><stop offset="1" stop-color="#000" stop-opacity="0.9"/></linearGradient></defs>
<path d="M1 1 H15 L10.2 6.6 V12 H5.8 V6.6 Z" fill="url(#fun)"/>
<path d="M1 1 H15 L10.2 6.6 V12 H5.8 V6.6 Z" fill="url(#funs)"/>
<path d="M1 1.4 H15" stroke="#555" stroke-width="0.9"/>
<path d="M15 1 L10.2 6.6 V12" fill="none" stroke="#111" stroke-width="1"/>
<path d="M1 1 L5.8 6.6 V12" fill="none" stroke="#555" stroke-width="0.7"/>
</svg>
<svg class="a" style="left:599px;top:13px" width="8" height="5" viewBox="0 0 8 5"><path d="M0 0 H7.2 L3.6 4.1 Z" fill="#1e1e1e"/></svg>
<div class="a" style="left:620px;top:4px;width:755px;height:21px;border:1px solid #a0a0a0;border-right-color:#fff;border-bottom-color:#fff"></div>
<div class="a" style="left:620px;top:4px;width:754px;height:20px;border:1px solid #a0a0a0;border-top:0;border-left:0"></div>
<div class="a" style="left:621px;top:5px;width:752px;height:18px;border-left:1px solid #fff;border-top:1px solid #fff"></div>
<div class="a" style="left:623px;top:6px;width:150px;height:16px;border:1px solid #b0b0b0;background:#efefef"></div>
<svg class="a" style="left:761px;top:10px" width="9" height="8" viewBox="0 0 9 8"><path d="M0.8 0.5 L8.2 7.5 M8.2 0.5 L0.8 7.5" stroke="#2a2a2a" stroke-width="0.85"/></svg>
<div class="a" style="left:777px;top:6px;width:150px;height:16px;border:1px solid #b0b0b0;background:#efefef"></div>
<svg class="a" style="left:915px;top:10px" width="9" height="8" viewBox="0 0 9 8"><path d="M0.8 0.5 L8.2 7.5 M8.2 0.5 L0.8 7.5" stroke="#2a2a2a" stroke-width="0.85"/></svg>
<svg class="a" style="left:1378px;top:7px" width="16" height="16" viewBox="0 0 16 16">
<defs><radialGradient id="hg" cx="0.35" cy="0.3" r="0.8"><stop offset="0" stop-color="#5ee06a"/><stop offset="0.5" stop-color="#1cae30"/><stop offset="1" stop-color="#067018"/></radialGradient></defs>
<circle cx="8" cy="8" r="7.3" fill="url(#hg)"/>
<path d="M5.6 6 C5.6 3.2 10.6 3.2 10.6 5.9 C10.6 7.6 8.4 7.8 8.4 9.6" fill="none" stroke="#fff" stroke-width="2"/>
<rect x="7.3" y="10.8" width="2.2" height="2" fill="#fff"/>
</svg>

<!-- toolbar row 2 -->
<svg class="a" style="left:578px;top:31px" width="16" height="16" viewBox="0 0 16 16">
<g fill="#000"><rect x="1" y="1" width="6" height="1.2"/><rect x="8" y="1" width="6" height="1.2"/>
<rect x="1" y="4" width="6" height="1.2"/><rect x="8" y="4" width="6" height="1.2"/>
<rect x="1" y="7" width="6" height="1.2"/><rect x="8" y="7" width="6" height="1.2"/>
<rect x="1" y="10" width="6" height="1.2"/><rect x="8" y="10" width="6" height="1.2"/>
<rect x="1" y="13" width="6" height="1.2"/><rect x="8" y="13" width="6" height="1.2"/></g>
</svg>
<svg class="a" style="left:599px;top:37px" width="8" height="5" viewBox="0 0 8 5"><path d="M0 0 H7.2 L3.6 4.1 Z" fill="#1e1e1e"/></svg>
<svg class="a" style="left:652px;top:30px" width="18" height="17" viewBox="0 0 18 17">
<text x="4.8" y="7.9" font-family="Liberation Serif" font-weight="bold" font-size="10" fill="#3a62b8" text-anchor="middle">A</text>
<text x="4.9" y="15.9" font-family="Liberation Serif" font-weight="bold" font-size="10" fill="#9a2c24" text-anchor="middle">Z</text>
<path d="M13.5 1 V15" stroke="#000" stroke-width="1.2"/><path d="M11 11.2 L13.5 15.6 L16 11.2" fill="none" stroke="#000" stroke-width="1.2"/>
</svg>
<svg class="a" style="left:674px;top:37px" width="8" height="5" viewBox="0 0 8 5"><path d="M0 0 H7.2 L3.6 4.1 Z" fill="#1e1e1e"/></svg>
<div class="a" style="left:686px;top:28px;width:628px;height:21px;border:1px solid #a0a0a0;border-right-color:#fff;border-bottom-color:#fff"></div>
<div class="a" style="left:686px;top:28px;width:627px;height:20px;border-right:1px solid #a0a0a0;border-bottom:1px solid #a0a0a0"></div>
<div class="a" style="left:687px;top:29px;width:625px;height:18px;border-left:1px solid #fff;border-top:1px solid #fff"></div>
<svg class="a" style="left:1363px;top:37px" width="8" height="5" viewBox="0 0 8 5"><path d="M0 0 H7.2 L3.6 4.1 Z" fill="#1e1e1e"/></svg>
<svg class="a" style="left:1377px;top:32px" width="14" height="14" viewBox="0 0 14 14">
<defs><linearGradient id="rg" x1="0" y1="0" x2="1" y2="1"><stop offset="0" stop-color="#7ad67a"/><stop offset="1" stop-color="#1f9a2f"/></linearGradient></defs>
<path d="M10.5 1.2 C6.5 1.6 4.6 4.2 5.2 8.2" fill="none" stroke="url(#rg)" stroke-width="2.6"/>
<path d="M1.4 7.6 L9.2 7.6 L5.4 12.8 Z" fill="#2fae3c"/>
<path d="M7.8 12.6 C11.8 12.2 13.4 9.6 13 5.8" fill="none" stroke="url(#rg)" stroke-width="2.6"/>
<path d="M9.2 6.6 L16.6 6.6 L13.0 1.4 Z" fill="#3cbc48"/>
</svg>

<!-- table -->
<div class="a" style="left:525px;top:50px;width:865px;height:498px;background:#fff"></div>
<div class="a" style="left:525px;top:50px;width:852px;height:1px;background:#a0a0a0"></div>
<div class="a" style="left:525px;top:51px;width:851px;height:17px;background:#f0f0f0"></div>
<div class="a" style="left:525px;top:68px;width:852px;height:1px;background:#6e6e6e"></div>
<div class="a" style="left:525px;top:69px;width:1px;height:479px;background:#e4e4e4"></div>
<div class="a" style="left:630px;top:51px;width:1px;height:17px;background:#6e6e6e"></div>
<div class="a" style="left:630px;top:69px;width:1px;height:72px;background:#d6d6d6"></div>
<div class="a" style="left:713px;top:51px;width:1px;height:17px;background:#6e6e6e"></div>
<div class="a" style="left:713px;top:69px;width:1px;height:72px;background:#d6d6d6"></div>
<div class="a" style="left:880px;top:51px;width:1px;height:17px;background:#6e6e6e"></div>
<div class="a" style="left:880px;top:69px;width:1px;height:72px;background:#d6d6d6"></div>
<div class="a" style="left:975px;top:51px;width:1px;height:17px;background:#6e6e6e"></div>
<div class="a" style="left:975px;top:69px;width:1px;height:72px;background:#d6d6d6"></div>
<div class="a" style="left:1138px;top:51px;width:1px;height:17px;background:#6e6e6e"></div>
<div class="a" style="left:1138px;top:69px;width:1px;height:72px;background:#d6d6d6"></div>
<div class="a" style="left:1281px;top:51px;width:1px;height:17px;background:#6e6e6e"></div>
<div class="a" style="left:1281px;top:69px;width:1px;height:72px;background:#d6d6d6"></div>
<div class="a" style="left:1376px;top:51px;width:1px;height:17px;background:#6e6e6e"></div>
<div class="a" style="left:1376px;top:69px;width:1px;height:72px;background:#d6d6d6"></div>
<div class="a" style="left:525px;top:86px;width:852px;height:1px;background:#d6d6d6"></div>
<div class="a" style="left:525px;top:104px;width:852px;height:1px;background:#d6d6d6"></div>
<div class="a" style="left:525px;top:122px;width:852px;height:1px;background:#d6d6d6"></div>
<div class="a" style="left:525px;top:140px;width:852px;height:1px;background:#d6d6d6"></div>
<div class="a" style="left:881px;top:69px;width:94px;height:17px;background:#3a47cf"></div>
<div class="tri" style="left:1139px;top:69px"></div>
<div class="a" style="left:881px;top:87px;width:94px;height:17px;background:#808080"></div>
<div class="tri" style="left:976px;top:87px"></div>
<div class="tri" style="left:1139px;top:87px"></div>
<div class="a" style="left:881px;top:105px;width:94px;height:17px;background:#60b652"></div>
<div class="tri" style="left:976px;top:105px"></div>
<div class="a" style="left:881px;top:123px;width:94px;height:17px;background:#3a47cf"></div>
<div class="tri" style="left:976px;top:123px"></div>
<div class="tri" style="left:1139px;top:123px"></div><div class="t" style="left:529.70px;top:7.79px;letter-spacing:-0.296px;">Filter</div>
<div class="t" style="left:529.70px;top:31.49px;letter-spacing:-0.734px;">Columns</div>
<div class="t" style="left:619.80px;top:31.59px;letter-spacing:0.061px;">Sort</div>
<div class="t" style="left:1336.50px;top:32.59px;letter-spacing:-1.147px;-webkit-text-stroke:0.45px #000;">SQL</div>
<div class="t" style="left:626.00px;top:7.49px;letter-spacing:-0.364px;">"VisualTool" NOT IN Classes</div>
<div class="t" style="left:780.10px;top:7.49px;letter-spacing:-0.264px;">"Navigator" NOT IN Classes</div>
<div class="t" style="left:528.70px;top:51.69px;letter-spacing:0.033px;">Object</div>
<div class="t" style="left:633.80px;top:51.69px;letter-spacing:-0.942px;">Name</div>
<div class="t" style="left:716.70px;top:51.69px;letter-spacing:-0.572px;">Shape</div>
<div class="t" style="left:883.80px;top:51.69px;letter-spacing:-0.631px;">Color</div>
<div class="t" style="left:979.20px;top:51.69px;letter-spacing:-0.124px;">Triggers.OnCreation</div>
<div class="t" style="left:1141.30px;top:51.69px;letter-spacing:-0.475px;">ProcessTime</div>
<div class="t" style="left:1284.40px;top:51.69px;letter-spacing:-0.253px;">Location</div>
<div class="c p" style="left:586.30px;top:69.89px;letter-spacing:-0.344px;">/Source1</div>
<div class="c" style="left:633.80px;top:69.89px;letter-spacing:-0.376px;">Source1</div>
<div class="c" style="left:716.90px;top:69.89px;letter-spacing:-0.124px;">fs3d\Source\Source.3ds</div>
<div class="c" style="left:1321.60px;top:69.89px;letter-spacing:0.157px;">[-12, -1, 0]</div>
<div class="c p" style="left:587.50px;top:87.89px;letter-spacing:-0.297px;">/Queue1</div>
<div class="c" style="left:633.80px;top:87.89px;letter-spacing:-0.285px;">Queue1</div>
<div class="c" style="left:716.90px;top:87.89px;letter-spacing:-0.055px;">fs3d\Queue\Queue.3ds</div>
<div class="c" style="left:1327.40px;top:87.89px;letter-spacing:0.204px;">[-8, -1, 0]</div>
<div class="c p" style="left:572.40px;top:105.89px;letter-spacing:-0.317px;">/Processor1</div>
<div class="c" style="left:633.80px;top:105.89px;letter-spacing:-0.335px;">Processor1</div>
<div class="c" style="left:716.90px;top:105.89px;letter-spacing:-0.119px;">fs3d\Processor\Processor.3ds</div>
<div class="c" style="left:1327.40px;top:105.89px;letter-spacing:0.204px;">[-3, -1, 0]</div>
<div class="c p" style="left:600.20px;top:123.89px;letter-spacing:-0.571px;">/Sink1</div>
<div class="c" style="left:633.80px;top:123.89px;letter-spacing:-0.675px;">Sink1</div>
<div class="c" style="left:716.90px;top:123.89px;letter-spacing:-0.272px;">fs3d\Sink\Sink.3DS</div>
<div class="c" style="left:1331.50px;top:123.89px;letter-spacing:0.178px;">[5, -1, 0]</div>
<div class="c" style="left:978.70px;top:69.89px;letter-spacing:-0.304px;">Set Label and Color</div>
<div class="c" style="left:1141.30px;top:105.89px;letter-spacing:-0.233px;">Values By Case (s)</div>
</body></html>
